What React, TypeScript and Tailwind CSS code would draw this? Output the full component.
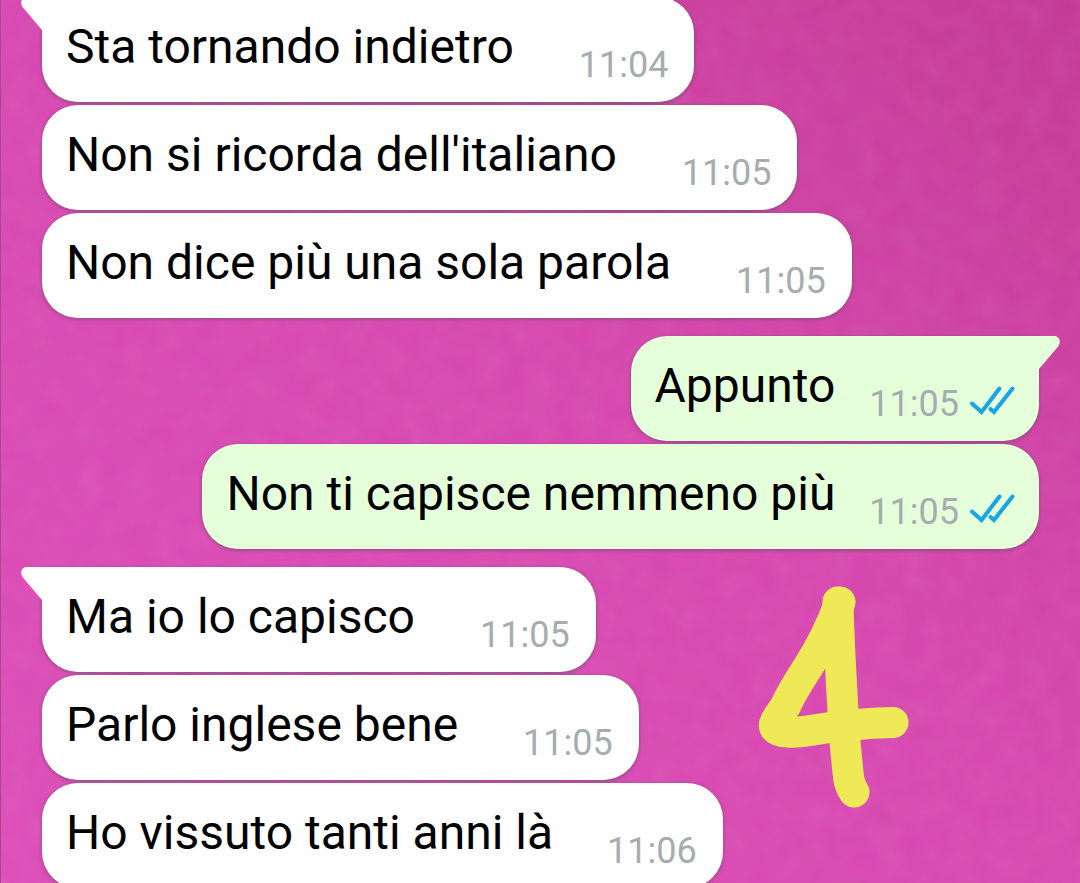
import React from 'react';

type Message = {
  id: number;
  text: string;
  time: string;
  tight?: boolean;
};

type Group = {
  id: string;
  outgoing: boolean;
  messages: Message[];
};

const groups: Group[] = [
  {
    id: 'g1',
    outgoing: false,
    messages: [
      { id: 1, text: 'Sta tornando indietro', time: '11:04' },
      { id: 2, text: "Non si ricorda dell'italiano", time: '11:05' },
      { id: 3, text: 'Non dice più una sola parola', time: '11:05' },
    ],
  },
  {
    id: 'g2',
    outgoing: true,
    messages: [
      { id: 4, text: 'Appunto', time: '11:05' },
      { id: 5, text: 'Non ti capisce nemmeno più', time: '11:05' },
    ],
  },
  {
    id: 'g3',
    outgoing: false,
    messages: [
      { id: 6, text: 'Ma io lo capisco', time: '11:05' },
      { id: 7, text: 'Parlo inglese bene', time: '11:05' },
      { id: 8, text: 'Ho vissuto tanti anni là', time: '11:06', tight: true },
    ],
  },
];

const ReadTicks: React.FC = () => (
  <svg
    width="46"
    height="32"
    viewBox="0 0 46 32"
    fill="none"
    stroke="#17a6e3"
    strokeWidth="4"
    strokeLinecap="round"
    role="img"
    aria-label="Letto"
    className="mb-2 ml-[10px] shrink-0"
  >
    <path d="M3 18.500 L12.500 27 L30.500 3.500" />
    <path d="M21.500 24 L25 27 L43.500 3.500" />
  </svg>
);

const Tail: React.FC<{ outgoing: boolean }> = ({ outgoing }) => (
  <svg
    width="22"
    height="34"
    viewBox="0 0 22 34"
    aria-hidden="true"
    className={
      outgoing
        ? 'absolute top-0 left-full -ml-px fill-[#e5ffdb]'
        : 'absolute top-0 right-full -mr-px -scale-x-100 fill-white'
    }
  >
    <path d="M0 0 H16 C21 0 23.500 5 20.500 10 L1 33 L0 34 Z" />
  </svg>
);

const Bubble: React.FC<{ message: Message; outgoing: boolean; first: boolean }> = ({
  message,
  outgoing,
  first,
}) => (
  <li
    className={`relative flex items-end rounded-[36px] pt-[22px] pb-4 pl-6 shadow-[0_1px_3px_1px_rgba(80,80,80,0.4)] ${
      outgoing ? 'bg-[#e5ffdb] pr-6' : 'bg-white pr-[26px]'
    } ${first && outgoing ? 'rounded-tr-none' : ''} ${first && !outgoing ? 'rounded-tl-none' : ''}`}
  >
    {first && <Tail outgoing={outgoing} />}
    <p
      className={`mb-[11px] text-[48px] leading-[56px] text-black ${
        outgoing ? 'mr-[34px]' : message.tight ? 'mr-[54px]' : 'mr-[65px]'
      }`}
    >
      {message.text}
    </p>
    <time className="text-4xl leading-[42px] text-[#a6acaf]">{message.time}</time>
    {outgoing && <ReadTicks />}
  </li>
);

const Wallpaper: React.FC = () => (
  <div className="absolute inset-0 border-l border-[#a8458f] bg-linear-to-bl from-[#c63795] via-[#d946b1] via-45% to-[#df4cba]">
    <svg className="h-full w-full opacity-10" aria-hidden="true">
      <filter id="paper">
        <feTurbulence type="fractalNoise" baseFrequency="0.04" numOctaves="2" seed="4" />
        <feColorMatrix type="saturate" values="0" />
      </filter>
      <rect width="100%" height="100%" filter="url(#paper)" />
    </svg>
  </div>
);

// Freehand marker stroke drawn over the chat
const Marker: React.FC = () => (
  <svg
    width="152"
    height="224"
    viewBox="758 585 152 224"
    fill="none"
    stroke="#efe957"
    strokeWidth="31"
    strokeLinecap="round"
    strokeLinejoin="round"
    aria-hidden="true"
    className="absolute top-[585px] right-[170px]"
  >
    <path d="M840 602 C832 624 822 645 808 667 C797 684 791 694 786 705 C780 715 772 723 775 728 C779 733 795 733 807 731 C836 726 865 723 893 722.500" />
    <path d="M838 602 C839 650 842 690 844 730 C846 752 848 775 849 780 C850 785 852 789 854 792" />
  </svg>
);

const App: React.FC = () => {
  return (
    <main className="relative isolate h-screen overflow-hidden font-['Roboto',sans-serif]">
      <Wallpaper />
      <div className="relative -mt-[3px] flex flex-col gap-[18px] pl-[42px] pr-[41px]">
        {groups.map((group) => (
          <ul
            key={group.id}
            className={`flex flex-col gap-[3px] ${group.outgoing ? 'items-end' : 'items-start'}`}
          >
            {group.messages.map((message, i) => (
              <Bubble
                key={message.id}
                message={message}
                outgoing={group.outgoing}
                first={i === 0}
              />
            ))}
          </ul>
        ))}
      </div>
      <Marker />
    </main>
  );
};

export default App;
